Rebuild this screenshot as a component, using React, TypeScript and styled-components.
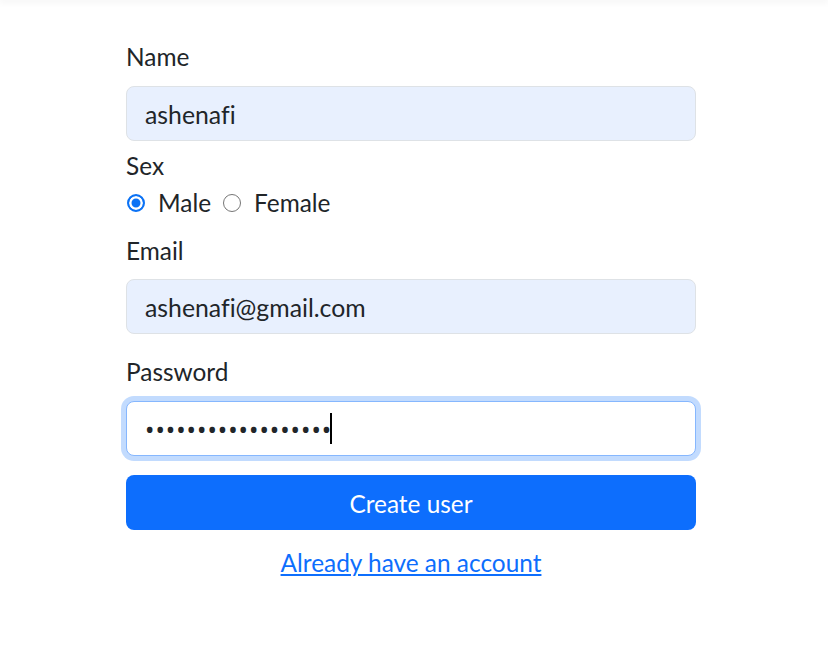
import React from "react";
import styled, { createGlobalStyle } from "styled-components";

const GlobalStyle = createGlobalStyle`
  html, body { margin: 0; padding: 0; background: #fff; }
  body {
    font-family: Lato, "Noto Sans", sans-serif;
    font-variant-ligatures: none;
    color: #212529;
  }
  * { box-sizing: border-box; }
`;

const TopShadow = styled.div`
  height: 0;
  box-shadow: 0 0 7px 1px rgba(0, 0, 0, 0.12);
`;

const Form = styled.form`
  width: 570px;
  margin: 0 0 0 126px;
  padding-top: 38px;
  display: flex;
  flex-direction: column;
  font-size: 24.4px;
  line-height: 37.5px;
`;

const Group = styled.div<{ $mb?: number }>`
  display: flex;
  flex-direction: column;
  margin-bottom: ${(p) => p.$mb ?? 0}px;
`;

const Label = styled.label<{ $mb?: number; $mt?: number }>`
  display: block;
  margin-top: ${(p) => p.$mt ?? 0}px;
  margin-bottom: ${(p) => p.$mb ?? 10}px;
  color: #212529;
`;

const Field = styled.div`
  position: relative;
`;

const Input = styled.input<{ $autofill?: boolean; $focused?: boolean; $secret?: boolean }>`
  display: block;
  width: 100%;
  height: 55px;
  padding: 8px 18px 6px;
  font-family: ${(p) => (p.$secret ? '"Noto Sans", sans-serif' : "inherit")};
  font-variant-ligatures: none;
  font-size: ${(p) => (p.$secret ? 25 : 24.8)}px;
  letter-spacing: ${(p) => (p.$secret ? 1 : 0)}px;
  color: #212529;
  border: 1px solid ${(p) => (p.$focused ? "#86b7fe" : "#dee2e6")};
  border-radius: 8px;
  background: ${(p) => (p.$autofill ? "#e8f0fe" : "#fff")};
  outline: none;
  box-shadow: ${(p) => (p.$focused ? "0 0 0 5px rgba(13, 110, 253, 0.25)" : "none")};
`;

const Caret = styled.span`
  position: absolute;
  left: 204px;
  top: 12px;
  width: 2px;
  height: 31px;
  background: #000;
`;

const RadioRow = styled.div`
  display: flex;
  align-items: center;
  margin-bottom: 10px;
`;

const Radio = styled.input`
  appearance: none;
  -webkit-appearance: none;
  width: 18px;
  height: 18px;
  margin: 0 13px 0 1px;
  flex: none;
  border-radius: 50%;
  border: 1.5px solid #767676;
  background: #fff;
  &:checked {
    border: 2px solid #0b72f5;
    background: #0b72f5;
    box-shadow: inset 0 0 0 2.5px #fff;
  }
`;

const RadioLabel = styled.label`
  margin-right: 11px;
`;

const Button = styled.button`
  height: 55px;
  width: 100%;
  margin-top: 19px;
  padding: 4px 0 0;
  border: none;
  border-radius: 8px;
  background: #0d6efd;
  color: #fff;
  font: inherit;
  cursor: pointer;
`;

const LinkRow = styled.div`
  margin-top: 14px;
  text-align: center;
`;

const Link = styled.a`
  color: #0d6efd;
  text-decoration: underline;
`;

export default function App() {
  return (
    <>
      <GlobalStyle />
      <TopShadow />
      <Form onSubmit={(e) => e.preventDefault()}>
        <Group>
          <Label htmlFor="name">Name</Label>
          <Input id="name" $autofill defaultValue="ashenafi" />
        </Group>
        <Label as="div" $mb={0} $mt={6}>
          Sex
        </Label>
        <RadioRow>
          <Radio type="radio" name="sex" id="male" defaultChecked />
          <RadioLabel htmlFor="male">Male</RadioLabel>
          <Radio type="radio" name="sex" id="female" />
          <RadioLabel htmlFor="female">Female</RadioLabel>
        </RadioRow>
        <Group $mb={19}>
          <Label htmlFor="email">Email</Label>
          <Input id="email" $autofill defaultValue="ashenafi@gmail.com" />
        </Group>
        <Group>
          <Label htmlFor="password">Password</Label>
          <Field>
            <Input
              id="password"
              type="password"
              $focused
              $secret
              defaultValue="ashenafi1234567890"
            />
            <Caret />
          </Field>
        </Group>
        <Button type="submit">Create user</Button>
        <LinkRow>
          <Link href="#">Already have an account</Link>
        </LinkRow>
      </Form>
    </>
  );
}
